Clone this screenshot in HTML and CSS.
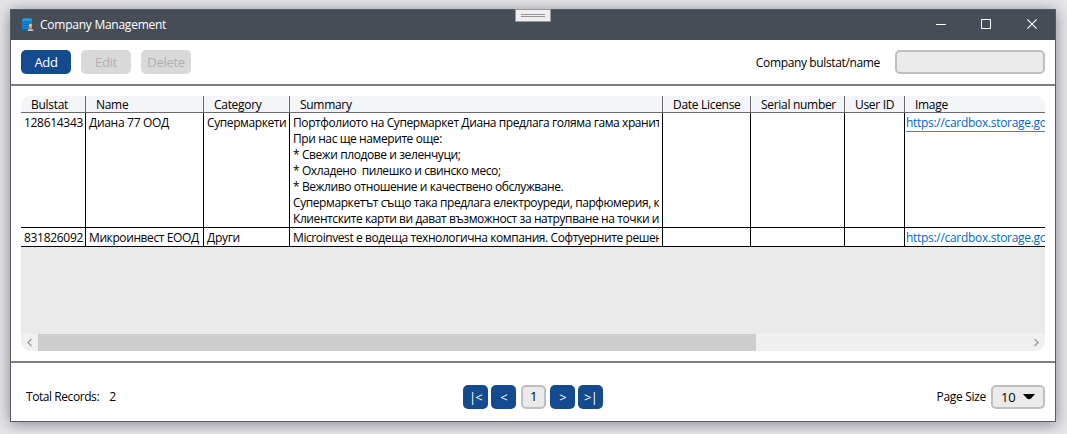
FILE: index.html
```html
<!DOCTYPE html>
<html lang="en">
<head>
<meta charset="utf-8">
<title>Company Management</title>
<link rel="stylesheet" href="styles.css">
</head>
<body>
<div class="window">
  <div class="grip"><i></i><i></i></div>
  <header class="titlebar">
    <svg class="app-icon" width="13" height="14" viewBox="0 0 13 14">
      <path d="M1 1.500 2.500.500h7L11 1.500V11.500H1z" fill="#1583cd"/>
      <path d="M1 1.500 2.500.500h7l1.500 1v1H1z" fill="#27a5e8"/>
      <path d="M2.500 4.500h7M2.500 6.500h6M2.500 8.500h5" stroke="#1069b4" stroke-dasharray="1.500 .800"/>
      <path d="M1 11h6v2H1z" fill="#135f9c"/>
      <circle cx="9.500" cy="7.500" r="1.700" fill="#f7c04a"/>
      <path d="M8.300 9h2.400v2.800H8.300z" fill="#ed8b2b"/>
      <path d="M6.500 13c0-1.500 1-2 3-1.600 2-.4 3 .1 3 1.600z" fill="#c9c3bd"/>
    </svg>
    <h1 class="title">Company Management</h1>
    <svg class="controls" width="104" height="12" viewBox="0 0 104 12" fill="none" stroke="#fff">
      <path d="M0 6.500h10"/>
      <path d="M45.500 1.500h9v9h-9z"/>
      <path d="m91.300 1.300 9.400 9.400m0-9.400-9.400 9.400" stroke-width="1.100"/>
    </svg>
  </header>
  <div class="toolbar">
    <button class="btn">Add</button>
    <button class="btn disabled">Edit</button>
    <button class="btn disabled">Delete</button>
    <label class="search-label" for="search">Company bulstat/name</label>
    <input class="search" id="search">
  </div>
  <main class="content">
    <div class="table">
      <div class="row head">
        <span>Bulstat</span><span>Name</span><span>Category</span><span>Summary</span><span>Date License</span><span>Serial number</span><span>User ID</span><span>Image</span>
      </div>
      <div class="row first">
        <div>128614343</div><div>Диана 77 ООД</div><div class="tight">Супермаркети</div>
        <div class="summary"><p>Портфолиото на Супермаркет Диана предлага голяма гама хранит</p><p>При нас ще намерите още:</p><p>* Свежи плодове и зеленчуци;</p><p>* Охладено  пилешко и свинско месо;</p><p>* Вежливо отношение и качествено обслужване.</p><p>Супермаркетът също така предлага електроуреди, парфюмерия, к</p><p>Клиентските карти ви дават възможност за натрупване на точки и</p></div>
        <div></div><div></div><div></div><div class="link"><a>https://cardbox.storage.go</a></div>
      </div>
      <div class="row second">
        <div>831826092</div><div class="tight">Микроинвест ЕООД</div><div>Други</div>
        <div class="summary"><p>Microinvest е водеща технологична компания. Софтуерните решен</p></div>
        <div></div><div></div><div></div><div class="link"><a>https://cardbox.storage.go</a></div>
      </div>
      <div class="empty"></div>
      <div class="scrollbar">
        <svg width="17" height="17" fill="none" stroke="#a0a0a0" stroke-width="1.500"><path d="M10.500 5 7 8.500l3.500 3.500"/></svg>
        <div class="thumb"></div>
        <svg class="right" width="17" height="17" fill="none" stroke="#a0a0a0" stroke-width="1.500"><path d="m6.500 5 3.500 3.500L6.500 12"/></svg>
      </div>
    </div>
  </main>
  <footer class="footer">
    <div class="total"><span>Total Records:</span><span>2</span></div>
    <nav class="pager">
      <button class="page">|&lt;</button><button class="page">&lt;</button><span class="current">1</span><button class="page">&gt;</button><button class="page">&gt;|</button>
    </nav>
    <div class="size"><span>Page Size</span><div class="select"><span>10</span><svg width="12" height="6"><path d="M0 0h12L8 4.500Q6 6 4 4.500z" fill="#000"/></svg></div></div>
  </footer>
</div>
</body>
</html>
```
FILE: styles.css
```css
* { box-sizing: border-box; }
body {
  margin: 0;
  height: 434px;
  padding: 9px 11px 12px 10px;
  overflow: hidden;
  background: #e6e5ea;
  font: 12px/16px "Open Sans", "Noto Sans", sans-serif;
  letter-spacing: -0.3px;
  color: #000;
}
button, input { font: inherit; letter-spacing: inherit; padding: 0; border: 0; }
p { margin: 0; }
.window {
  position: relative;
  height: 413px;
  border: 1px solid #565d66;
  background: #fff;
  box-shadow: 0 2px 14px rgba(0, 0, 0, .42);
  display: flex;
  flex-direction: column;
}
.grip {
  position: absolute;
  left: 504px;
  top: -1px;
  width: 36px;
  height: 13px;
  padding: 4px 5px;
  border: 1px solid #999;
  background: #efeef3;
  display: flex;
  flex-direction: column;
  gap: 1px;
}
.grip i { height: 1px; background: #929297; }
.titlebar {
  height: 30px;
  flex: none;
  background: #464d57;
  color: #fff;
  display: flex;
  align-items: center;
  padding: 0 15px 0 10px;
}
.app-icon { margin-right: 6px; }
.title { margin: 0; font-size: 12px; font-weight: 400; letter-spacing: -0.25px; }
.controls { margin: -2px 0 0 auto; }
.toolbar {
  height: 46px;
  flex: none;
  border-bottom: 2px solid #7f7e84;
  display: flex;
  align-items: center;
  gap: 10px;
  padding: 0 10px;
}
.btn {
  width: 50px;
  height: 24px;
  border-radius: 5px;
  background: #144a8e;
  color: #fff;
  font-size: 13px;
  line-height: 22px;
}
.disabled { background: #d9d9d9; color: #b0b0b0; }
.search-label { margin-left: auto; margin-right: 5px; padding-top: 2px; letter-spacing: -0.36px; }
.search, .current, .select {
  height: 24px;
  border: 2px solid #bfbfbf;
  border-radius: 5px;
  background: #eaeaea;
}
.search { width: 150px; }
.content { padding: 10px; height: 275px; flex: none; }
.table {
  height: 255px;
  border-radius: 10px;
  overflow: hidden;
  background: #eaeaea;
  display: flex;
  flex-direction: column;
}
.row {
  display: grid;
  grid-template-columns: 65px 118px 86px 373px 88px 94px 60px 140px;
  background: #fff;
  border-bottom: 1px solid #000;
  flex: none;
}
.row > * { border-right: 1px solid #000; padding: 2px 3px 0; white-space: pre; overflow: hidden; }
.row > :last-child { border-right: 0; }
.head { height: 17px; background: #f4f5f8; border-color: #6b6b6f; }
.head > * { border-color: #6b6b6f; padding: 1px 10px 0; line-height: 16px; }
.first { height: 115px; }
.second { height: 19px; }
.tight { letter-spacing: -0.4px; }
.summary { letter-spacing: -0.41px; }
.summary p { overflow: hidden; }
.row .link { padding: 2px 0 0 1px; }
.link a { display: block; color: #0066cc; border-bottom: 1px solid #3c86d0; height: 17px; }
.empty { flex: 1; }
.scrollbar { display: flex; height: 17px; background: #f0f0f0; }
.thumb { width: 718px; background: #cdcdcd; }
.right { margin-left: auto; }
.footer {
  height: 60px;
  border-top: 2px solid #7f7e84;
  padding: 22px 10px 0 15px;
  display: grid;
  grid-template-columns: 437px 140px 1fr;
}
.total { display: flex; gap: 10px; line-height: 24px; letter-spacing: -0.43px; }
.pager { display: flex; height: 24px; gap: 3px; }
.page, .current { width: 25px; border-radius: 5px; text-align: center; font-size: 13px; }
.page { background: #144a8e; color: #fff; line-height: 22px; letter-spacing: -0.8px; }
.current { margin: 0 1px 0 2px; line-height: 19px; }
.size { display: flex; justify-content: flex-end; gap: 5px; line-height: 24px; }
.select { width: 54px; display: flex; align-items: center; gap: 8px; padding-left: 8px; font-size: 13px; }
```
